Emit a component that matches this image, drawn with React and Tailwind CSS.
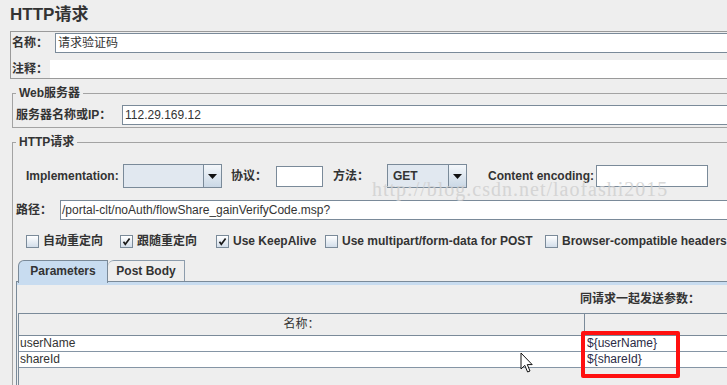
import React from "react";

const Check = ({ checked }) => (
  <span className="w-[13px] h-[13px] shrink-0 border border-[#7a8a99] bg-gradient-to-b from-[#ffffff] to-[#d3deea] flex items-center justify-center">
    {checked && (
      <svg width="9" height="9" viewBox="0 0 9 9">
        <path d="M1.5 4.8 L3.3 7.3 L7.6 1.6" stroke="#1a1a1a" strokeWidth="1.7" fill="none" />
      </svg>
    )}
  </span>
);

const Combo = ({ w, text }) => (
  <div className={`${w} h-[24px] shrink-0 flex border border-[#7a8a99] bg-[#e1e8f0]`}>
    <div className="flex-1 flex items-center pl-[5px] font-bold leading-[16px]">{text}</div>
    <div className="w-[18px] border-l border-[#7a8a99] bg-gradient-to-b from-[#f4f7fa] to-[#cad8e6] flex items-center justify-center">
      <svg width="9" height="5" viewBox="0 0 9 5">
        <path d="M0 0 L9 0 L4.5 5 Z" fill="#111" />
      </svg>
    </div>
  </div>
);

export default function App() {
  return (
    <div className="relative w-[727px] h-[385px] overflow-hidden bg-[#eeeeee] text-[12px] text-[#333] font-['Liberation_Sans','Noto_Sans_CJK_SC',sans-serif]">
      <div className="w-[820px]">
        <div className="h-[31px] pl-[10px] pt-[5px] text-[17px] leading-[20px] font-bold text-[#333]">HTTP请求</div>

        {/* name / comment */}
        <div className="ml-[10px] border border-[#9a9a9a] pt-[1px]">
          <div className="flex h-[20px]">
            <div className="w-[44px] pl-[1px] font-bold leading-[20px]">名称：</div>
            <div className="flex-1 border border-[#7a8a99] bg-white pl-[2px] leading-[18px]">请求验证码</div>
          </div>
          <div className="flex h-[18px] mt-[7px]">
            <div className="w-[39px] pl-[1px] font-bold leading-[18px]">注释：</div>
            <div className="flex-1 bg-white" />
          </div>
        </div>

        {/* Web server */}
        <fieldset className="ml-[12px] mt-[6px] border border-[#a3a3a3] pb-[2px]">
          <legend className="ml-[3px] px-[3px] font-bold leading-[16px] text-[#333]">Web服务器</legend>
          <div className="flex h-[20px] mt-[4px]">
            <div className="w-[109px] pl-[3px] font-bold leading-[20px]">服务器名称或IP：</div>
            <div className="flex-1 border border-[#7a8a99] bg-white pl-[2px] leading-[18px]">112.29.169.12</div>
          </div>
        </fieldset>

        {/* HTTP request */}
        <fieldset className="ml-[12px] mt-[6px] border border-[#a3a3a3]">
          <legend className="ml-[3px] px-[3px] font-bold leading-[16px] text-[#333]">HTTP请求</legend>

          <div className="flex items-center h-[24px] mt-[14px] pl-[13px]">
            <div className="w-[97px] font-bold">Implementation:</div>
            <Combo w="w-[99px]" text="" />
            <div className="ml-[9px] w-[45px] font-bold">协议：</div>
            <div className="w-[47px] h-[21px] border border-[#7a8a99] bg-white" />
            <div className="ml-[10px] w-[54px] font-bold">方法：</div>
            <Combo w="w-[80px]" text="GET" />
            <div className="ml-[21px] w-[108px] font-bold">Content encoding:</div>
            <div className="w-[112px] h-[22px] border border-[#7a8a99] bg-white" />
          </div>

          <div className="flex h-[20px] mt-[12px]">
            <div className="w-[47px] pl-[3px] font-bold leading-[20px]">路径：</div>
            <div className="flex-1 border border-[#7a8a99] bg-white pl-[1px] leading-[18px]">/portal-clt/noAuth/flowShare_gainVerifyCode.msp?</div>
          </div>

          <div className="flex items-center h-[14px] mt-[14px] pl-[13px] font-bold">
            <div className="w-[94px] flex items-center gap-[4px]"><Check /><span>自动重定向</span></div>
            <div className="w-[96px] flex items-center gap-[4px]"><Check checked /><span>跟随重定向</span></div>
            <div className="w-[109px] flex items-center gap-[4px]"><Check checked /><span>Use KeepAlive</span></div>
            <div className="w-[220px] flex items-center gap-[4px]"><Check /><span>Use multipart/form-data for POST</span></div>
            <div className="flex items-center gap-[4px] whitespace-nowrap"><Check /><span>Browser-compatible headers</span></div>
          </div>

          {/* tabs */}
          <div className="ml-[3px] mt-[12px]">
            <div className="flex pl-[2px] h-[22px]">
              <div className="relative z-10 w-[90px] h-[23px] border border-b-0 border-[#7a8a99] rounded-tl-[6px] bg-[#c8dcf0] font-bold flex items-center justify-center pb-[2px]">Parameters</div>
              <div className="w-[77px] h-[21px] border border-b-0 border-l-0 border-[#8c9cac] rounded-tl-[6px] bg-[#eeeeee] font-bold flex items-center justify-center">Post Body</div>
            </div>
            <div className="-mt-[1px] border-l border-t border-[#7a8a99] pl-[1px]">
              <div className="h-[3px] bg-[#c8dcf0] -ml-[1px]" />
              <div className="mt-[6px] pl-[562px] h-[16px] leading-[16px] font-bold whitespace-nowrap">同请求一起发送参数：</div>
              <div className="mt-[6px] border-l border-t border-[#7a8a99]">
                <div className="flex h-[22px] border-b border-[#7a8a99] bg-[#eeeeee]">
                  <div className="w-[566px] border-r border-[#7a8a99] text-center leading-[21px]">名称：</div>
                  <div className="flex-1" />
                </div>
                <div className="flex h-[16px] border-b border-[#8595a5] bg-white leading-[15px]">
                  <div className="w-[567px] pl-[1px]">userName</div>
                  <div className="flex-1 pl-[1px] text-[#2b2b45]">{"${userName}"}</div>
                </div>
                <div className="flex h-[16px] border-b border-[#8595a5] bg-white leading-[15px]">
                  <div className="w-[567px] pl-[1px]">shareId</div>
                  <div className="flex-1 pl-[1px] text-[#2b2b45]">{"${shareId}"}</div>
                </div>
                <div className="h-[40px]" />
              </div>
            </div>
          </div>
        </fieldset>
      </div>

      {/* watermark */}
      <div className="absolute left-[372px] top-[177px] text-[20px] leading-[24px] tracking-[1px] text-[#cfcfcf] opacity-80 font-['Liberation_Serif',serif] whitespace-nowrap pointer-events-none">
        http://blog.csdn.net/laofashi2015
      </div>

      {/* red highlight box */}
      <div className="absolute left-[581px] top-[331px] w-[99px] h-[47px] border-[4px] border-[#ff1010] rounded-[2px]" />

      {/* mouse cursor */}
      <svg className="absolute left-[520px] top-[352px]" width="14" height="22" viewBox="0 0 14 22">
        <path d="M1 1 L1 17 L4.8 13.4 L7.6 20 L10 19 L7.3 12.6 L12.2 12.6 Z" fill="#fff" stroke="#111" strokeWidth="1" strokeLinejoin="miter" />
      </svg>
    </div>
  );
}
